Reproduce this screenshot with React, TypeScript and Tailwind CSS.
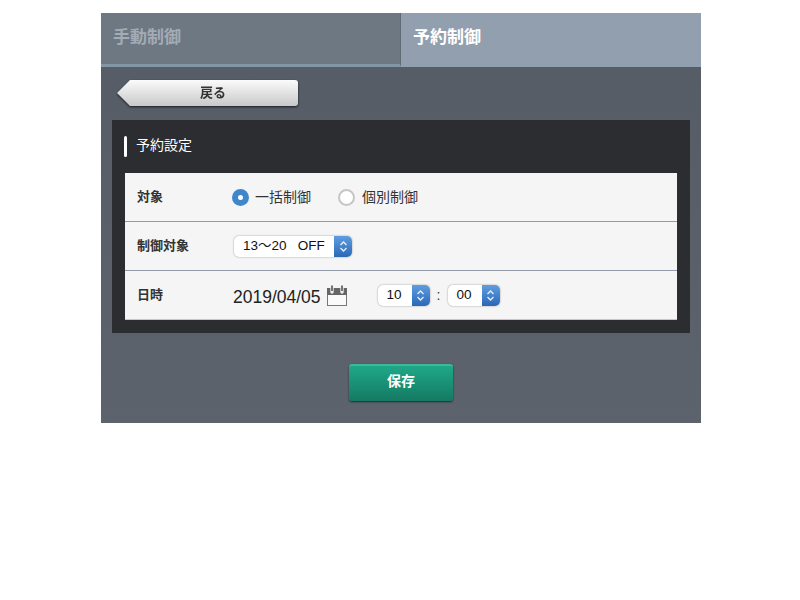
import React from 'react';

const jp = "font-['Liberation_Sans','Noto_Sans_CJK_JP',sans-serif]";

const Stepper = () => (
  <span className="flex h-full w-[18px] items-center justify-center rounded-r-[5px] bg-gradient-to-b from-[#5f9de0] to-[#2a68b8]">
    <svg width="9" height="13" viewBox="0 0 9 13" fill="none" stroke="#e8f0fa" strokeWidth="1.3">
      <path d="M1.5 5 L4.5 2 L7.5 5" />
      <path d="M1.5 8 L4.5 11 L7.5 8" />
    </svg>
  </span>
);

const Select = ({ value, className }: { value: string; className: string }) => (
  <div className={`flex h-[21px] items-center justify-between rounded-[5px] bg-white shadow-[0_0_2px_rgba(0,0,0,0.4)] ${className}`}>
    <span className="whitespace-pre pl-[9px] text-[13.5px] leading-none text-[#111]">{value}</span>
    <Stepper />
  </div>
);

const Row = ({ label, last, children }: { label: string; last?: boolean; children: React.ReactNode }) => (
  <div className={`flex h-[49px] items-center border-b ${last ? 'border-[#c4c8d0]' : 'border-[#9299a8]'}`}>
    <div className="w-[108px] pl-[12px] text-[13px] font-bold text-[#333]">{label}</div>
    {children}
  </div>
);

// dark band across the top with two light notches holding the rings
const CalendarIcon = () => (
  <svg width="20" height="21" viewBox="0 0 20 21" fill="none">
    <rect x="0.5" y="3.5" width="19" height="17" fill="#fafafa" stroke="#777" />
    <rect x="0" y="3" width="20" height="7" fill="#666" />
    <path d="M5 2 V7 M15 2 V7" stroke="#f0f0f0" strokeWidth="3.4" strokeLinecap="round" />
    <path d="M5 0.5 V6 M15 0.5 V6" stroke="#555" strokeWidth="1.6" />
  </svg>
);

export default function App() {
  return (
    <div className={`min-h-[600px] bg-white pt-[13px] ${jp}`}>
      <div className="ml-[101px] w-[600px] bg-gradient-to-b from-[#555c66] to-[#5c636c]">
        <div className="flex h-[54px]">
          <div className="flex w-[300px] items-center border-b-[3px] border-r border-b-[#8396a6] border-r-[#5f6a75] bg-[#6d7883] pl-[12px] pb-[1px] text-[17px] font-bold text-[#a3abb4]">
            手動制御
          </div>
          <div className="flex flex-1 items-center bg-[#929fae] pl-[12px] pb-[5px] text-[17px] font-bold text-white">
            予約制御
          </div>
        </div>

        <div className="px-[11px]">
          <div className="flex h-[53px] items-start pl-[5px] pt-[13px]">
            <div className="drop-shadow-[0_1px_1px_rgba(0,0,0,0.7)]">
              <div className="flex h-[26px] w-[181px] items-center justify-center rounded-r-[3px] bg-gradient-to-b from-[#fbfbfb] to-[#c9c9c9] pl-[11px] text-[13px] font-bold text-[#333] [clip-path:polygon(13px_0,100%_0,100%_100%,13px_100%,0_50%)]">
                戻る
              </div>
            </div>
          </div>

          <div className="h-[213px] w-[578px] bg-[#2c2d30] px-[13px]">
            <div className="-ml-[1px] flex h-[52px] items-center">
              <span className="mr-[9px] h-[21px] w-[3px] rounded-[2px] bg-white" />
              <span className="pb-[2px] text-[14px] text-white">予約設定</span>
            </div>
            <div className="mt-[1px] w-[552px] bg-[#f5f5f5]">
              <Row label="対象">
                <div className="flex items-center">
                  <span className="-ml-[1px] flex h-[17px] w-[17px] items-center justify-center rounded-full bg-[#3f87cb]">
                    <span className="h-[5px] w-[5px] rounded-full bg-white" />
                  </span>
                  <span className="ml-[6px] text-[14px] text-[#333]">一括制御</span>
                  <span className="ml-[27px] h-[17px] w-[17px] rounded-full border-2 border-[#c6c6c6] bg-white" />
                  <span className="ml-[7px] text-[14px] text-[#333]">個別制御</span>
                </div>
              </Row>
              <Row label="制御対象">
                <Select value="13〜20   OFF" className="ml-[1px] w-[118px]" />
              </Row>
              <Row label="日時" last>
                <span className="pt-[5px] text-[17.5px] text-[#222]">2019/04/05</span>
                <span className="ml-[6px] flex"><CalendarIcon /></span>
                <Select value="10" className="ml-[31px] w-[52px]" />
                <span className="mx-[7px] w-[4px] text-[14px] text-[#333]">:</span>
                <Select value="00" className="w-[52px]" />
              </Row>
            </div>
          </div>
        </div>

        <div className="flex h-[90px] justify-center pt-[31px]">
          <button className="h-[37px] w-[104px] rounded-[3px] border-t-2 border-t-[#3fb79a] bg-gradient-to-b from-[#1fa888] to-[#147a62] pb-[5px] text-[14px] font-bold text-white shadow-[0_1px_2px_rgba(0,0,0,0.6)]">
            保存
          </button>
        </div>
      </div>
    </div>
  );
}
